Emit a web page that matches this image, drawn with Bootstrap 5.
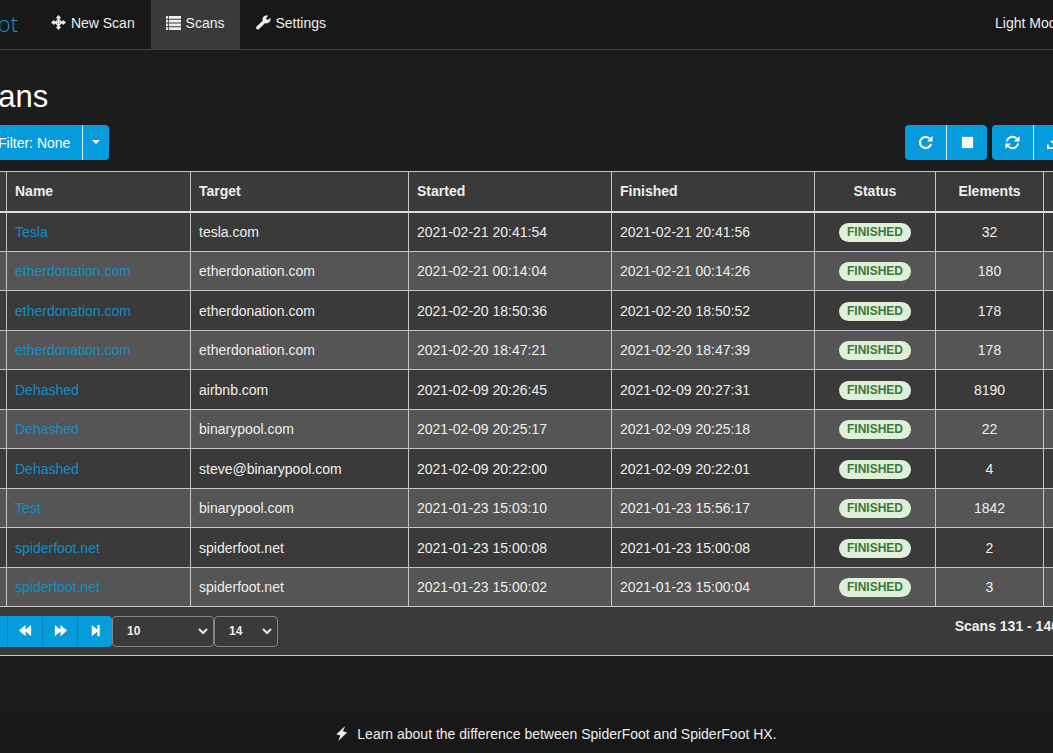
<!DOCTYPE html>
<html lang="en" data-bs-theme="dark">
<head>
<meta charset="utf-8">
<meta name="viewport" content="width=device-width, initial-scale=1">
<title>SpiderFoot - Scans</title>
<link href="https://cdn.jsdelivr.net/npm/bootstrap@5.3.0/dist/css/bootstrap.min.css" rel="stylesheet">
<style>
  body { background: #1c1c1c; color: #eee; font: 14px/20px "Liberation Sans", Arial, sans-serif; overflow: hidden; }
  .shell { margin: 0 -62px 0 -38px; min-height: 100vh; }
  .topbar { background: #181818; border-bottom: 1px solid #3f3f3f; height: 50px; flex-wrap: nowrap; }
  .brand-col { width: 73px; }
  .brand-name { color: #1a96d2; font: 300 22px/46px "Open Sans", sans-serif; text-decoration: none; margin-right: 17px; }
  .topbar .nav-link { color: #eee; padding: 13px 16px 16px; }
  .topbar .nav-link.active { background: #3a3a3a; padding-right: 15px; padding-left: 15px; }
  .glyph { width: 15px; height: 15px; fill: currentColor; vertical-align: -2px; }
  .topbar .glyph { margin-right: 1px; }
  .mode-switch { width: 120px; padding-bottom: 4px; }
  h1 { font-size: 31px; line-height: 36px; margin: 29px 0 10px; font-weight: 400; }
  .btn-blue { --bs-btn-bg: #069bdb; --bs-btn-color: #fff; --bs-btn-hover-bg: #0587c0; --bs-btn-hover-color: #fff; --bs-btn-border-width: 0; --bs-btn-border-radius: 4px; --bs-btn-font-size: 14px; --bs-btn-padding-y: 0; --bs-btn-padding-x: 12px; height: 35px; line-height: 20px; }
  .filter-btn { padding-left: 36px; }
  .tool-group .btn + .btn { border-left: 1px solid #cfe9f6; margin-left: 0 !important; }
  .tool-icon { width: 41px; --bs-btn-padding-x: 0; }
  .caret-btn { width: 27px; --bs-btn-padding-x: 0; }
  .tools { gap: 5px; }
  .scan-grid { table-layout: fixed; width: 100%; background: #3a3a3a; border-collapse: collapse; border: 1px solid #c4c4c4; margin-top: 11px; }
  .scan-grid th, .scan-grid td { border: 1px solid #c4c4c4; padding: 0 8px; height: 40px; }
  .scan-grid tbody tr:nth-child(even) td { background: #555; height: 39px; }
  .scan-grid thead th { border-bottom: 2px solid #ddd; }
  .scan-grid a { color: #0f8fc8; text-decoration: none; }
  .scan-grid tfoot td { height: 49px; padding: 0 20px 0 9px; }
  .col-check { width: 44px; } .col-name { width: 184px; } .col-time { width: 203px; }
  .col-status { width: 121px; } .col-count { width: 108px; } .col-act { width: 71px; }
  .pill-done { display: inline-block; background: #dff0d8; color: #3c763d; font: bold 12px/19px "Liberation Sans", Arial, sans-serif; border-radius: 10px; padding: 0 8px; vertical-align: middle; }
  .pager-btn { width: 35px; height: 31px; --bs-btn-padding-x: 0; }
  .pager-group .btn + .btn { border-left: 1px solid #0a86bd; margin-left: 0 !important; }
  .scan-grid .form-select { height: 31px; background-color: #3a3a3a; border: 1px solid #858585; border-radius: 4px; color: #eee; font: bold 12px/20px "Liberation Sans", Arial, sans-serif; padding: 0 24px 0 14px; background-position: right 4px center; background-size: 12px 12px; background-image: url("data:image/svg+xml,%3csvg xmlns='http://www.w3.org/2000/svg' viewBox='0 0 12 12'%3e%3cpath fill='none' stroke='%23eee' stroke-width='2' d='M2 4l4 4 4-4'/%3e%3c/svg%3e"); }
  .scan-grid .size-pick { width: 102px; } .scan-grid .page-pick { width: 64px; }
  .promo { background: #181818; height: 41px; margin-top: 57px; padding-left: 34px; }
  .promo a { color: #eee; text-decoration: none; }
</style>
</head>
<body>
<svg class="d-none">
  <symbol id="g-target" viewBox="0 0 16 16"><path fill-rule="evenodd" d="M8 0l3 3.500H9.300V5A4 4 0 0 1 11 6.700h1.500V5L16 8l-3.500 3V9.300H11A4 4 0 0 1 9.300 11v1.500H11L8 16l-3-3.500h1.700V11A4 4 0 0 1 5 9.300H3.500V11L0 8l3.500-3v1.700H5A4 4 0 0 1 6.700 5V3.500H5zM7.300 6.200L6.200 7.300h1.100zM8.700 6.200v1.100h1.100zM6.200 8.700l1.100 1.100V8.700zM8.700 8.700v1.100l1.100-1.100z"/></symbol>
  <symbol id="g-list" viewBox="0 0 16 16"><path d="M0 1h2v3H0zM3 1h13v3H3zM0 5h2v3H0zM3 5h13v3H3zM0 9h2v3H0zM3 9h13v3H3zM0 13h2v3H0zM3 13h13v3H3z"/></symbol>
  <symbol id="g-wrench" viewBox="0 0 16 16"><path d="M15.300 3.200l-2.900 2-1.900-1.500L13 .8C11 0 9 .5 7.800 2 6.800 3.200 6.800 4.700 7.200 6L.8 12c-.9.9-.9 2-.1 2.800.8.8 2 .7 2.800-.1L9.600 8.700c1.600.5 3.400.2 4.700-1.200 1.200-1.200 1.600-2.900 1-4.300z"/></symbol>
  <symbol id="g-repeat" viewBox="0 0 16 16"><path d="M13.800 9.500A5.900 5.900 0 1 1 12 3.600" fill="none" stroke="currentColor" stroke-width="2.300"/><path d="M15.500 .8v6H9.500z"/></symbol>
  <symbol id="g-stop" viewBox="0 0 16 16"><path d="M2 2h12v12H2z"/></symbol>
  <symbol id="g-refresh" viewBox="0 0 16 16"><path d="M2 7A6 6 0 0 1 12.500 4M14 9A6 6 0 0 1 3.500 12" fill="none" stroke="currentColor" stroke-width="2"/><path d="M15.500 1v6h-6zM.5 15V9h6z"/></symbol>
  <symbol id="g-save" viewBox="0 0 16 16"><path d="M6.500 0h3v6H13l-5 5-5-5h3.500zM0 10h2v3h12v-3h2v5H0z"/></symbol>
  <symbol id="g-trash" viewBox="0 0 16 16"><path d="M6 0h4v2h4v2H2V2h4zM3 5h10v11H3z"/></symbol>
  <symbol id="g-back" viewBox="0 0 16 16"><path d="M8 2v5l6-5v12L8 9v5L1 8z"/></symbol>
  <symbol id="g-fwd" viewBox="0 0 16 16"><path d="M8 2v5L2 2v12l6-5v5l7-6z"/></symbol>
  <symbol id="g-last" viewBox="0 0 16 16"><path d="M4 2l6 5V2h2.500v12H10V9l-6 5z"/></symbol>
  <symbol id="g-first" viewBox="0 0 16 16"><path d="M12 2L6 7V2H3.500v12H6V9l6 5z"/></symbol>
  <symbol id="g-flash" viewBox="0 0 16 16"><path d="M12 0L2.500 8.800l4.300 1.200L4.500 16 14 6.800 9.500 5.600z"/></symbol>
</svg>
<div class="shell d-flex flex-column">
  <nav class="topbar navbar p-0 align-items-start justify-content-start">
    <div class="brand-col text-end"><a class="brand-name float-end" href="#">SpiderFoot</a></div>
    <div class="d-flex">
      <a class="nav-link" href="#"><svg class="glyph"><use href="#g-target"/></svg> New Scan</a>
      <a class="nav-link active" aria-current="page" href="#"><svg class="glyph"><use href="#g-list"/></svg> Scans</a>
      <a class="nav-link" href="#"><svg class="glyph"><use href="#g-wrench"/></svg> Settings</a>
    </div>
    <div class="mode-switch ms-auto align-self-center"><label for="mode">Light Mode</label> <input id="mode" type="checkbox"></div>
  </nav>
  <main>
    <h1>Scans</h1>
    <div class="d-flex justify-content-between">
      <div class="btn-group tool-group">
        <button class="btn btn-blue filter-btn" type="button">Filter: None</button>
        <button class="btn btn-blue caret-btn dropdown-toggle" type="button" aria-label="Choose filter"></button>
      </div>
      <div class="d-flex tools">
        <div class="btn-group tool-group">
          <button class="btn btn-blue tool-icon" type="button" aria-label="Re-run"><svg class="glyph"><use href="#g-repeat"/></svg></button>
          <button class="btn btn-blue tool-icon" type="button" aria-label="Stop"><svg class="glyph"><use href="#g-stop"/></svg></button>
        </div>
        <div class="btn-group tool-group">
          <button class="btn btn-blue tool-icon" type="button" aria-label="Refresh"><svg class="glyph"><use href="#g-refresh"/></svg></button>
          <button class="btn btn-blue tool-icon" type="button" aria-label="Export"><svg class="glyph"><use href="#g-save"/></svg></button>
          <button class="btn btn-blue tool-icon" type="button" aria-label="Delete"><svg class="glyph"><use href="#g-trash"/></svg></button>
        </div>
      </div>
    </div>
    <table class="scan-grid">
      <colgroup><col class="col-check"><col class="col-name"><col><col class="col-time"><col class="col-time"><col class="col-status"><col class="col-count"><col class="col-act"></colgroup>
      <thead><tr><th></th><th>Name</th><th>Target</th><th>Started</th><th>Finished</th><th class="text-center">Status</th><th class="text-center">Elements</th><th></th></tr></thead>
      <tbody>
        <tr><td></td><td><a href="#">Tesla</a></td><td>tesla.com</td><td>2021-02-21 20:41:54</td><td>2021-02-21 20:41:56</td><td class="text-center"><span class="pill-done">FINISHED</span></td><td class="text-center">32</td><td></td></tr>
        <tr><td></td><td><a href="#">etherdonation.com</a></td><td>etherdonation.com</td><td>2021-02-21 00:14:04</td><td>2021-02-21 00:14:26</td><td class="text-center"><span class="pill-done">FINISHED</span></td><td class="text-center">180</td><td></td></tr>
        <tr><td></td><td><a href="#">etherdonation.com</a></td><td>etherdonation.com</td><td>2021-02-20 18:50:36</td><td>2021-02-20 18:50:52</td><td class="text-center"><span class="pill-done">FINISHED</span></td><td class="text-center">178</td><td></td></tr>
        <tr><td></td><td><a href="#">etherdonation.com</a></td><td>etherdonation.com</td><td>2021-02-20 18:47:21</td><td>2021-02-20 18:47:39</td><td class="text-center"><span class="pill-done">FINISHED</span></td><td class="text-center">178</td><td></td></tr>
        <tr><td></td><td><a href="#">Dehashed</a></td><td>airbnb.com</td><td>2021-02-09 20:26:45</td><td>2021-02-09 20:27:31</td><td class="text-center"><span class="pill-done">FINISHED</span></td><td class="text-center">8190</td><td></td></tr>
        <tr><td></td><td><a href="#">Dehashed</a></td><td>binarypool.com</td><td>2021-02-09 20:25:17</td><td>2021-02-09 20:25:18</td><td class="text-center"><span class="pill-done">FINISHED</span></td><td class="text-center">22</td><td></td></tr>
        <tr><td></td><td><a href="#">Dehashed</a></td><td>steve@binarypool.com</td><td>2021-02-09 20:22:00</td><td>2021-02-09 20:22:01</td><td class="text-center"><span class="pill-done">FINISHED</span></td><td class="text-center">4</td><td></td></tr>
        <tr><td></td><td><a href="#">Test</a></td><td>binarypool.com</td><td>2021-01-23 15:03:10</td><td>2021-01-23 15:56:17</td><td class="text-center"><span class="pill-done">FINISHED</span></td><td class="text-center">1842</td><td></td></tr>
        <tr><td></td><td><a href="#">spiderfoot.net</a></td><td>spiderfoot.net</td><td>2021-01-23 15:00:08</td><td>2021-01-23 15:00:08</td><td class="text-center"><span class="pill-done">FINISHED</span></td><td class="text-center">2</td><td></td></tr>
        <tr><td></td><td><a href="#">spiderfoot.net</a></td><td>spiderfoot.net</td><td>2021-01-23 15:00:02</td><td>2021-01-23 15:00:04</td><td class="text-center"><span class="pill-done">FINISHED</span></td><td class="text-center">3</td><td></td></tr>
      </tbody>
      <tfoot><tr><td colspan="8">
        <div class="d-flex">
          <div class="btn-group pager-group">
            <button class="btn btn-blue pager-btn" type="button" aria-label="First page"><svg class="glyph"><use href="#g-first"/></svg></button>
            <button class="btn btn-blue pager-btn" type="button" aria-label="Previous page"><svg class="glyph"><use href="#g-back"/></svg></button>
            <button class="btn btn-blue pager-btn" type="button" aria-label="Next page"><svg class="glyph"><use href="#g-fwd"/></svg></button>
            <button class="btn btn-blue pager-btn" type="button" aria-label="Last page"><svg class="glyph"><use href="#g-last"/></svg></button>
          </div>
          <select class="form-select size-pick" aria-label="Rows per page"><option>10</option></select>
          <select class="form-select page-pick" aria-label="Page"><option>14</option></select>
          <strong class="ms-auto">Scans 131 - 140 / 140</strong>
        </div>
      </td></tr></tfoot>
    </table>
  </main>
  <footer class="promo d-flex align-items-center justify-content-center">
    <a href="#"><svg class="glyph me-1"><use href="#g-flash"/></svg> Learn about the difference between SpiderFoot and SpiderFoot HX.</a>
  </footer>
</div>
<script src="https://cdn.jsdelivr.net/npm/bootstrap@5.3.0/dist/js/bootstrap.bundle.min.js"></script>
</body>
</html>
